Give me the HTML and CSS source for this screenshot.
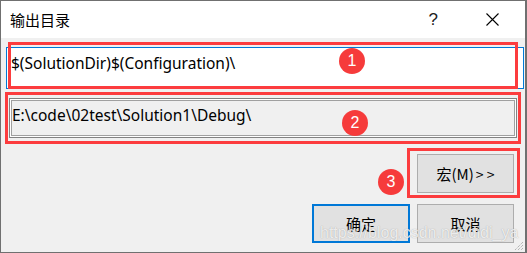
FILE: index.html
```html
<!DOCTYPE html>
<html>
<head>
	<title>输出目录</title>
	<link rel="stylesheet" href="styles.css">
</head>
<body>
	<div class="window">
		<div class="titlebar">
			<span class="title">输出目录</span>
			<span class="help">?</span>
			<span class="close">
				<svg width="13" height="13" viewBox="0 0 13 13">
					<path d="M0.5 0.5 L12.5 12.5 M12.5 0.5 L0.5 12.5" stroke="#000" stroke-width="1.1" fill="none"/>
				</svg>
			</span>
		</div>
		<div class="content">
			<div class="edit">$(SolutionDir)$(Configuration)\</div>
			<div class="preview">E:\code\02test\Solution1\Debug\</div>
			<div class="macro-row">
				<button class="btn">宏(M)<span class="arrows">&gt; &gt;</span></button>
			</div>
			<div class="actions">
				<button class="btn btn-default">确定</button>
				<button class="btn">取消</button>
			</div>
		</div>

		<!-- annotations -->
		<div class="mark mark-1"></div>
		<div class="mark mark-2"></div>
		<div class="mark mark-3"></div>
		<span class="badge badge-1">1</span>
		<span class="badge badge-2">2</span>
		<span class="badge badge-3">3</span>

		<span class="watermark">https://blog.csdn.net/didi_ya</span>
		<svg class="grip" width="11" height="11" viewBox="0 0 11 11">
			<path d="M10 2 L2 10 M10 5 L5 10 M10 8 L8 10" stroke="#9a9a9a" stroke-width="1" stroke-dasharray="1 1" fill="none"/>
		</svg>
	</div>
</body>
</html>
```

FILE: styles.css
```css
body {
	margin: 0;
	font-family: "Noto Sans", "Noto Sans CJK SC", sans-serif;
	font-size: 15.5px;
	color: #000;
}

.window {
	position: relative;
	width: 527px;
	height: 253px;
	box-sizing: border-box;
	border: 1px solid #707070;
	border-right-width: 2px;
	background-color: #f0f0f0;
	overflow: hidden;
}

.titlebar {
	display: flex;
	align-items: center;
	height: 37px;
	background-color: #fff;
	padding-left: 9px;
}

.title {
	font-family: "Noto Sans CJK SC", sans-serif;
	font-size: 15px;
	flex: 1;
}

.help {
	font-family: "Liberation Sans", sans-serif;
	font-size: 17px;
	margin-right: 48px;
	color: #222;
}

.close {
	display: flex;
	margin-right: 26px;
}

.content {
	display: flex;
	flex-direction: column;
}

.edit {
	margin: 9px 0 0 5px;
	width: 518px;
	height: 42px;
	box-sizing: border-box;
	border: 1px solid #0078d7;
	background-color: #fff;
	padding: 3px 4px 0;
	line-height: 24px;
}

.preview {
	margin: 9px 0 0 8px;
	width: 508px;
	height: 40px;
	box-sizing: border-box;
	border: 1px solid #828282;
	box-shadow: inset 0 0 0 1px #fff, inset 0 0 0 2px #a0a0a0;
	padding: 4px 2px;
	line-height: 24px;
}

.macro-row {
	display: flex;
	justify-content: flex-end;
	margin-top: 16px;
	padding-right: 11px;
}

.actions {
	display: flex;
	justify-content: flex-end;
	gap: 7px;
	margin-top: 11px;
	padding-right: 11px;
}

.btn {
	width: 97px;
	height: 39px;
	background-color: #e1e1e1;
	border: 1px solid #adadad;
	font-family: "Noto Sans CJK SC", sans-serif;
	font-size: 15px;
	color: #000;
	padding: 0;
}

.arrows {
	margin-left: 2px;
	font-size: 14px;
}

.btn-default {
	width: 98px;
	border: 2px solid #0078d7;
}

.mark {
	position: absolute;
	border: 3px solid #fc3c3e;
	box-sizing: border-box;
}

.mark-1 { left: 7px; top: 41px; width: 510px; height: 47px; }
.mark-2 { left: 4px; top: 91px; width: 516px; height: 52px; }
.mark-3 { left: 406px; top: 147px; width: 113px; height: 50px; }

.badge {
	position: absolute;
	width: 26px;
	height: 26px;
	border-radius: 50%;
	background-color: #f63b3b;
	color: #fff;
	font-family: "Liberation Sans", sans-serif;
	font-size: 16px;
	line-height: 26px;
	text-align: center;
}

.badge-1 { left: 338px; top: 47px; }
.badge-2 { left: 341px; top: 109px; }
.badge-3 { left: 377px; top: 168px; }

.watermark {
	position: absolute;
	left: 319px;
	top: 223px;
	font-family: "Liberation Sans", sans-serif;
	font-size: 16px;
	color: rgba(255, 255, 255, 0.8);
	text-shadow: 0 0 1px rgba(110, 110, 110, 0.6);
}

.grip {
	position: absolute;
	right: 1px;
	bottom: 1px;
}
```
